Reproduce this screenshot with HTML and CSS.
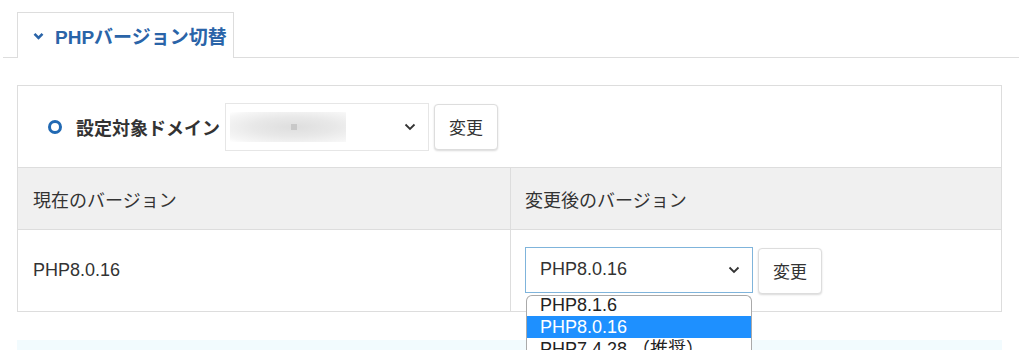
FILE: index.html
```html
<!DOCTYPE html>
<html lang="ja">
<head>
  <meta charset="UTF-8">
  <meta name="viewport" content="width=device-width, initial-scale=1.0">
  <title>PHPバージョン切替</title>
  <link rel="stylesheet" href="styles.css">
</head>
<body>
  <div class="tab-bar">
    <div class="tab">
      <svg class="tab-chevron" width="11" height="8" viewBox="0 0 11 8"><path d="M1.5 1.8 L5.5 5.8 L9.5 1.8" fill="none" stroke="#2a64a8" stroke-width="2.6"/></svg>
      <span>PHPバージョン切替</span>
    </div>
  </div>

  <div class="panel">
    <div class="domain-row">
      <span class="radio-ring"></span>
      <span class="domain-label">設定対象ドメイン</span>
      <div class="select domain-select">
        <span class="blurred"><span class="blur-dot"></span></span>
        <svg class="caret" width="12" height="8" viewBox="0 0 12 8"><path d="M1.5 1.5 L6 6 L10.5 1.5" fill="none" stroke="#333" stroke-width="1.8"/></svg>
      </div>
      <button class="btn">変更</button>
    </div>

    <div class="version-table">
      <div class="cell head">現在のバージョン</div>
      <div class="cell head">変更後のバージョン</div>
      <div class="cell">PHP8.0.16</div>
      <div class="cell">
        <div class="select-wrap">
          <div class="select version-select">
            <span>PHP8.0.16</span>
            <svg class="caret" width="12" height="8" viewBox="0 0 12 8"><path d="M1.5 1.5 L6 6 L10.5 1.5" fill="none" stroke="#333" stroke-width="1.8"/></svg>
          </div>
          <ul class="options">
            <li>PHP8.1.6</li>
            <li class="active">PHP8.0.16</li>
            <li>PHP7.4.28 （推奨）</li>
          </ul>
        </div>
        <button class="btn">変更</button>
      </div>
    </div>
  </div>

  <div class="notice"></div>
</body>
</html>
```

FILE: styles.css
```css
body {
  margin: 0;
  font-family: "Liberation Sans", "Noto Sans CJK JP", sans-serif;
  color: #333;
  background: #fff;
}
.tab-bar {
  margin: 0 5px 0 3px;
  padding: 12px 0 0 14px;
  border-bottom: 1px solid #ddd;
  display: flex;
}
.tab {
  width: 217px;
  height: 46px;
  border: 1px solid #ddd;
  border-bottom: none;
  margin-bottom: -1px;
  background: #fff;
  display: flex;
  align-items: center;
  box-sizing: border-box;
  padding-left: 15px;
  color: #2a64a8;
  font-weight: bold;
  font-size: 19px;
}
.tab-chevron {
  margin: 1px 11px 0 0;
}
.panel {
  margin: 27px 22px 0 17px;
  border: 1px solid #ddd;
}
.domain-row {
  height: 81px;
  display: flex;
  align-items: center;
  padding-left: 30px;
  box-sizing: border-box;
}
.radio-ring {
  width: 8px;
  height: 8px;
  border: 3px solid #2169b3;
  border-radius: 50%;
  margin-right: 14px;
}
.domain-label {
  font-weight: bold;
  font-size: 18px;
  color: #333;
  margin-right: 5px;
}
.select {
  display: flex;
  align-items: center;
  box-sizing: border-box;
  background: #fff;
  position: relative;
}
.domain-select {
  width: 204px;
  height: 48px;
  border: 1px solid #e6e6e6;
  padding: 0 12px 0 4px;
  justify-content: space-between;
}
.blurred {
  width: 116px;
  height: 30px;
  background: radial-gradient(ellipse at 55% 50%, #dedede 0%, #e8e8e8 45%, #f6f6f6 85%, #fff 100%);
  display: flex;
  align-items: center;
  justify-content: center;
}
.blur-dot {
  width: 6px;
  height: 6px;
  background: #c8c8c8;
  margin-left: 12px;
}
.btn {
  margin-left: 5px;
  width: 64px;
  height: 46px;
  border: 1px solid #ddd;
  border-radius: 4px;
  background: #fff;
  box-shadow: 0 1px 2px rgba(0, 0, 0, 0.15);
  font-family: "Liberation Sans", "Noto Sans CJK JP", sans-serif;
  font-size: 17px;
  color: #333;
  padding: 0;
}
.version-table {
  display: grid;
  grid-template-columns: 492px 1fr;
}
.cell {
  display: flex;
  align-items: center;
  padding-left: 15px;
  font-size: 18px;
  border-top: 1px solid #ddd;
  height: 62px;
  box-sizing: border-box;
}
.cell:nth-child(2n) {
  border-left: 1px solid #ddd;
  padding-left: 14px;
}
.cell.head {
  background: #f0f0f0;
}
.cell:nth-child(n+3) {
  height: 82px;
}
.select-wrap {
  position: relative;
}
.version-select {
  width: 228px;
  height: 46px;
  border: 1px solid #7fb4db;
  padding: 0 12px 0 14px;
  justify-content: space-between;
  font-size: 18px;
  color: #333;
  margin-top: -2px;
}
.options {
  position: absolute;
  top: 46px;
  left: 1px;
  width: 226px;
  height: 58px;
  margin: 0;
  padding: 0;
  list-style: none;
  border: 1px solid #aaa;
  border-bottom: none;
  border-radius: 6px 6px 0 0;
  background: #fff;
  overflow: hidden;
  box-sizing: border-box;
  z-index: 2;
}
.options li {
  height: 22px;
  line-height: 22px;
  padding-left: 13px;
  font-size: 18px;
  color: #222;
  position: relative;
  top: -2px;
}
.options li.active {
  background: #1e90ff;
  color: #fff;
}
.notice {
  margin: 28px 22px 0 17px;
  height: 40px;
  background: #f2fbfe;
}
```
